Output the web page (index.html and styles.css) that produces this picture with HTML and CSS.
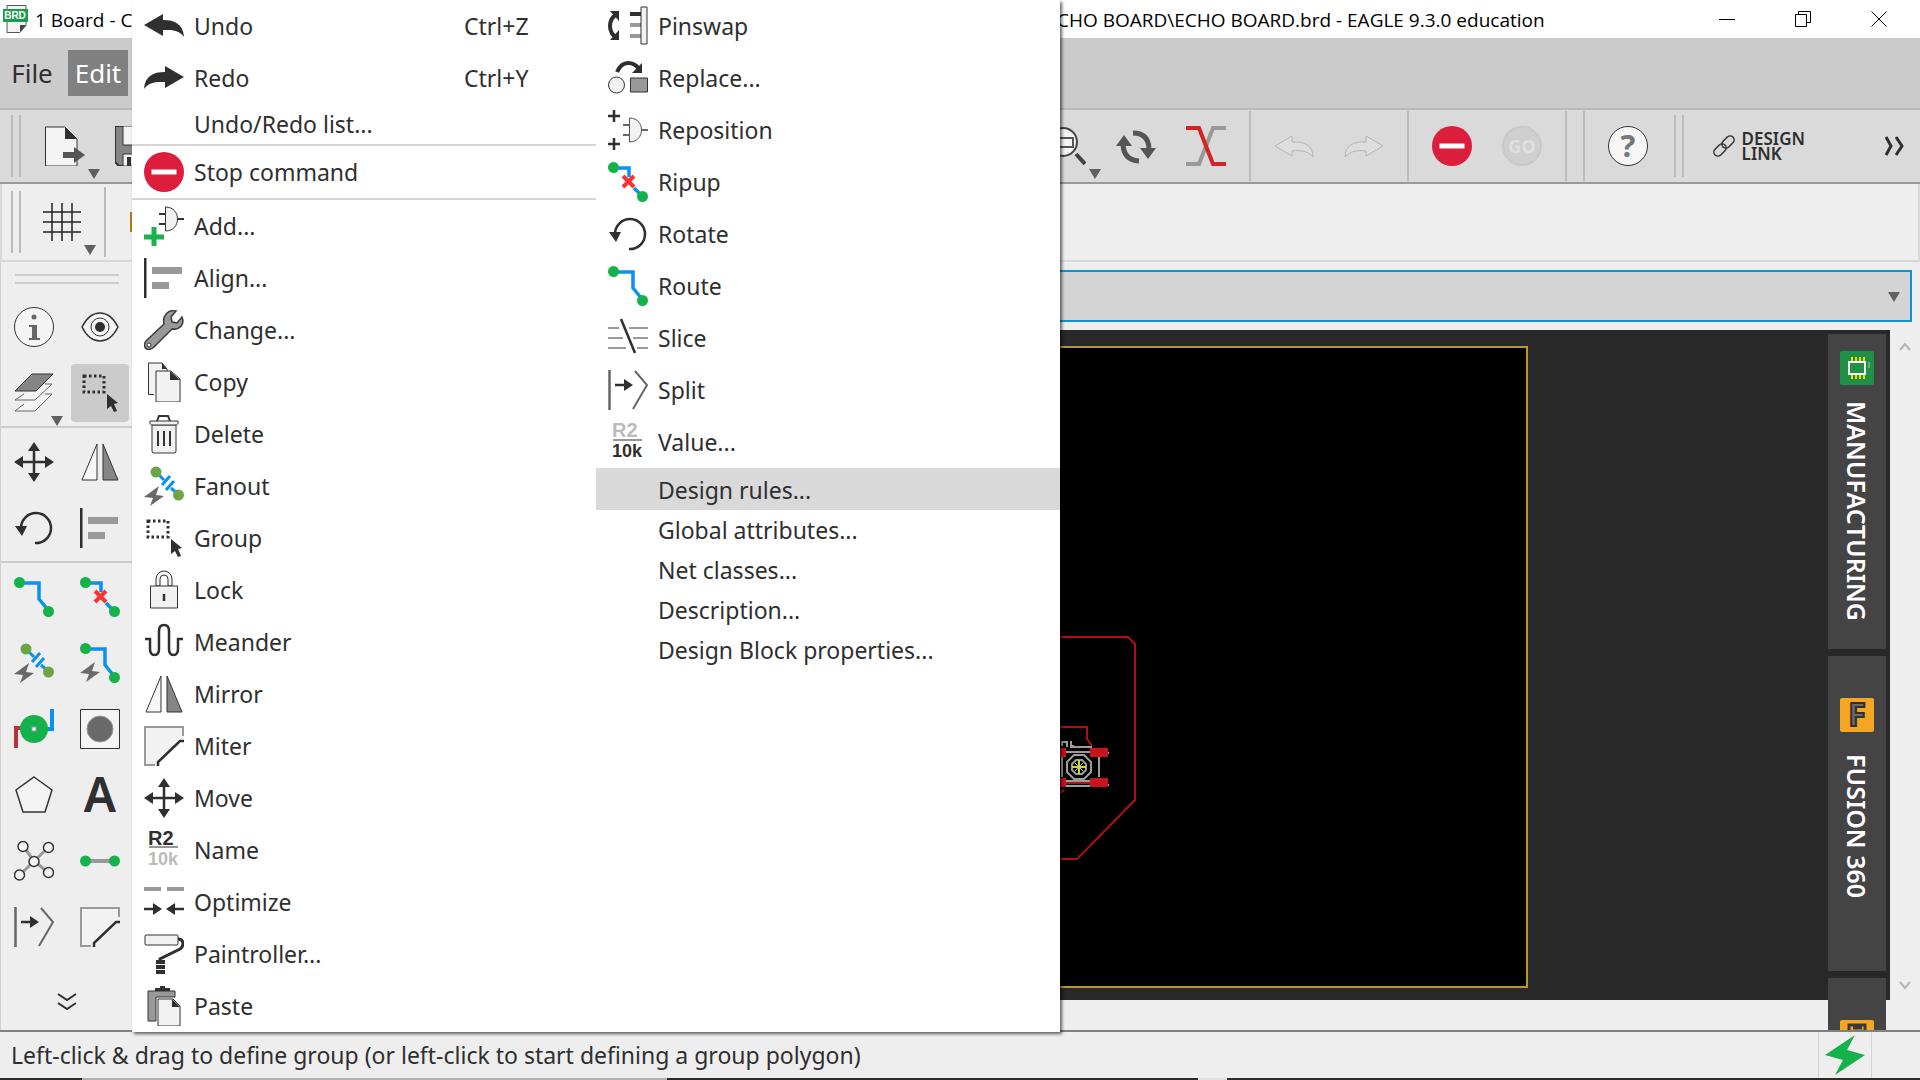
FILE: index.html
```html
<!DOCTYPE html>
<html lang="en">
<head>
    <meta charset="UTF-8">
    <meta name="viewport" content="width=device-width, initial-scale=1.0">
    <title>1 Board - EAGLE 9.3.0 education</title>
    <link rel="stylesheet" href="styles.css">
</head>
<body>
    <!-- Icon set, every symbol is drawn on a 40x40 grid -->
    <svg class="sprite" aria-hidden="true">
        <symbol id="undo" viewBox="0 0 40 40"><path d="M0 19L19 8V14C31 14 39 18 40 31C35 24 29 24 19 24V30Z" fill="#2f2f2f"/></symbol>
        <symbol id="redo" viewBox="0 0 40 40"><path d="M40 19L21 8V14C9 14 1 18 0 31C5 24 11 24 21 24V30Z" fill="#2f2f2f"/></symbol>
        <symbol id="undo-off" viewBox="0 0 40 40"><path d="M1 20L18 10V16C31 15 39 20 39 31C34 25 27 24 18 25V30Z" fill="#dedede" stroke="#b4b4b4"/></symbol>
        <symbol id="redo-off" viewBox="0 0 40 40"><path d="M39 20L22 10V16C9 15 1 20 1 31C6 25 13 24 22 25V30Z" fill="#dedede" stroke="#b4b4b4"/></symbol>
        <symbol id="stop" viewBox="0 0 40 40"><circle cx="20" cy="20" r="20" fill="#dc1e3c"/><path d="M7.500 17.500h25v5h-25z" fill="#fff"/></symbol>
        <symbol id="add" viewBox="0 0 40 40"><path d="M15 8h7M15 18h7M33 13h7" stroke="#333" stroke-width="2"/><path d="M21.500 1c8 0 12 6 12 12s-4 12-12 12z" fill="#f2f2f2" stroke="#333"/><path d="M0 31h20M10 21v20" stroke="#1cb14c" stroke-width="5"/></symbol>
        <symbol id="align" viewBox="0 0 40 40"><path d="M0 0h2.500v40H0z" fill="#2f2f2f"/><path d="M8 9h30v7H8zM8 24h17v7H8z" fill="#999"/></symbol>
        <symbol id="change" viewBox="0 0 40 40"><path d="M32 1L27 7L28 12L33 13L38 7C41 14 36 20 28 19L10 37C7 40 3 40 1.500 38C0 36 0 33 3 30L20 14C18 6 24-1 32 1Z" fill="#999" stroke="#3c3c3c" stroke-width="1.500"/><circle cx="5" cy="35" r="2" fill="#fff" stroke="#333"/></symbol>
        <symbol id="copy" viewBox="0 0 40 40"><path d="M10 32.500H4.500V1H18l5 6v4" fill="#f2f2f2" stroke="#333"/><path d="M18 1l5 6h-5z" fill="#2f2f2f"/><path d="M12 9h15l9 8v23H12z" fill="#f2f2f2" stroke="#333"/><path d="M26 9l10 9H26z" fill="#2f2f2f"/></symbol>
        <symbol id="delete" viewBox="0 0 40 40"><path d="M13 7l2-5h9l2 5" fill="none" stroke="#333" stroke-width="2"/><path d="M8 11h24v26q0 2-2 2H10q-2 0-2-2z" fill="#f2f2f2" stroke="#333"/><path d="M6 7h28q1 4-3 4H9Q5 11 6 7z" fill="#f2f2f2" stroke="#333"/><path d="M14 17v15M20 17v15M26 17v15" stroke="#333" stroke-width="2"/></symbol>
        <symbol id="fanout" viewBox="0 0 40 40"><path d="M12 6l8 8M27 22l8 7" stroke="#0a90f0" stroke-width="3"/><path d="M18 19l8-9M22 24l8-9" stroke="#0a90f0" stroke-width="3"/><circle cx="12" cy="6" r="5.500" fill="#6ba644"/><circle cx="34.500" cy="29" r="5.500" fill="#6ba644"/><path d="M15 20L0 31l9 1-3 8 14-10-8-1z" fill="#6a6a6a"/></symbol>
        <symbol id="group" viewBox="0 0 40 40"><rect x="4" y="3" width="20" height="16" fill="none" stroke="#2f2f2f" stroke-width="3" stroke-dasharray="2.500 2.500"/><path d="M27 21v15l4-3 3 6 3-1-3-7 4-1z" fill="#2f2f2f"/></symbol>
        <symbol id="lock" viewBox="0 0 40 40"><path d="M12 16V9a8 8 0 0 1 16 0v7h-4V9a4 4 0 0 0-8 0v7z" fill="#f2f2f2" stroke="#333"/><path d="M6.500 16h27v22h-27z" fill="#f2f2f2" stroke="#333"/><path d="M20 24v7" stroke="#333" stroke-width="2.500"/></symbol>
        <symbol id="meander" viewBox="0 0 40 40"><path d="M1 17h5v10q0 6 4.500 6T15 27V9q0-6 5-6t5 6v18q0 6 4.500 6T34 27V17h5" fill="none" stroke="#2f2f2f" stroke-width="2.500"/></symbol>
        <symbol id="mirror" viewBox="0 0 40 40"><path d="M17 2v36H2z" fill="#f6f6f6" stroke="#333"/><path d="M23 2v36h15z" fill="#858585" stroke="#333"/></symbol>
        <symbol id="miter" viewBox="0 0 40 40"><path d="M1 1h38v13L14 39H1z" fill="#f2f2f2"/><path d="M11 39H1V1h38v9" fill="none" stroke="#999" stroke-width="2"/><path d="M14 40v-4l22-21h4" fill="none" stroke="#2f2f2f" stroke-width="2.500"/></symbol>
        <symbol id="move" viewBox="0 0 40 40"><path d="M5 20h30M20 5v30" stroke="#2f2f2f" stroke-width="2.500"/><path d="M0 20l9-6v12zM40 20l-9-6v12zM20 0l-6 9h12zM20 40l-6-9h12z" fill="#2f2f2f"/></symbol>
        <symbol id="optimize" viewBox="0 0 40 40"><path d="M0 7h17M23 7h17" stroke="#999" stroke-width="4"/><path d="M0 27h12M28 27h12" stroke="#2f2f2f" stroke-width="2.500"/><path d="M9 21l9 6-9 6zM31 21l-9 6 9 6z" fill="#2f2f2f"/></symbol>
        <symbol id="paint" viewBox="0 0 40 40"><path d="M34 5q5 0 5 5 0 3-3 5L16 25v3" fill="none" stroke="#2f2f2f" stroke-width="3"/><rect x="1" y="1" width="33" height="10" rx="1" fill="#f2f2f2" stroke="#333"/><path d="M12 26h9v4h-9zM12 31h9v4h-9zM12 36h9v4h-9z" fill="#2f2f2f"/></symbol>
        <symbol id="paste" viewBox="0 0 40 40"><path d="M4 5h27v6H12v24H4z" fill="#999" stroke="#333"/><path d="M11 5V2h5V0h5v2h5v3z" fill="#2f2f2f"/><path d="M14 13h15l7 7v20H14z" fill="#f2f2f2" stroke="#333"/><path d="M28 13l8 8h-8z" fill="#2f2f2f"/></symbol>
        <symbol id="pinswap" viewBox="0 0 40 40"><path d="M9 8Q2 12 2 20t7 12" fill="none" stroke="#2f2f2f" stroke-width="4"/><path d="M2 5h9v10zM2 34h9V24z" fill="#2f2f2f"/><path d="M22 8h11" stroke="#2f2f2f" stroke-width="4"/><path d="M22 19h11M22 30h11" stroke="#999" stroke-width="4"/><path d="M33 1h6v37h-6z" fill="#f2f2f2" stroke="#333"/></symbol>
        <symbol id="replace" viewBox="0 0 40 40"><path d="M9 14Q13 5 20 5t11 6" fill="none" stroke="#2f2f2f" stroke-width="4"/><path d="M34 5v10H24z" fill="#2f2f2f"/><circle cx="8.500" cy="27" r="8" fill="#f2f2f2" stroke="#333"/><path d="M22.500 20h17v14h-17z" fill="#999" stroke="#333"/></symbol>
        <symbol id="reposition" viewBox="0 0 40 40"><path d="M0 6h12M6 0v12M0 34h12M6 28v12" stroke="#2f2f2f" stroke-width="2.500"/><path d="M15 15h7M15 25h7M33 20h7" stroke="#666" stroke-width="2"/><path d="M21.500 8c8 0 12 6 12 12s-4 12-12 12z" fill="#f2f2f2" stroke="#555"/></symbol>
        <symbol id="ripup" viewBox="0 0 40 40"><path d="M6 6h15v9M26 26l8 8" fill="none" stroke="#0a90f0" stroke-width="3.500"/><circle cx="5.500" cy="5.500" r="5.500" fill="#14b24b"/><circle cx="34.500" cy="34.500" r="5.500" fill="#14b24b"/><path d="M15 14l11 11M26 14L15 25" stroke="#fa3232" stroke-width="4"/></symbol>
        <symbol id="rotate" viewBox="0 0 40 40"><path d="M7 20A15 15 0 1 1 21 35" fill="none" stroke="#2f2f2f" stroke-width="2.500"/><path d="M1 18h12l-5 10z" fill="#2f2f2f"/></symbol>
        <symbol id="route" viewBox="0 0 40 40"><path d="M6 6h19v16l9 11" fill="none" stroke="#0a90f0" stroke-width="3.500"/><circle cx="5.500" cy="5.500" r="5.500" fill="#14b24b"/><circle cx="34.500" cy="34.500" r="5.500" fill="#14b24b"/></symbol>
        <symbol id="autoroute" viewBox="0 0 40 40"><path d="M6 6h19v16l9 11" fill="none" stroke="#0a90f0" stroke-width="3.500"/><circle cx="5.500" cy="5.500" r="5.500" fill="#14b24b"/><circle cx="34.500" cy="34.500" r="5.500" fill="#14b24b"/><path d="M15 19L0 30l9 1-3 8 14-10-8-1z" fill="#6a6a6a"/></symbol>
        <symbol id="slice" viewBox="0 0 40 40"><path d="M0 10h11M21 10h19M0 20h15M25 20h15M0 30h18M29 30h11" stroke="#999" stroke-width="2"/><path d="M13 1l14 34" stroke="#2f2f2f" stroke-width="2.500"/></symbol>
        <symbol id="split" viewBox="0 0 40 40"><path d="M1.500 0v40" stroke="#666" stroke-width="2.500"/><path d="M7 15h12" stroke="#2f2f2f" stroke-width="2.500"/><path d="M16 9l9 6-9 6z" fill="#2f2f2f"/><path d="M27 1l12 14-14 24" fill="none" stroke="#666" stroke-width="2"/></symbol>
        <symbol id="info" viewBox="0 0 40 40"><circle cx="20" cy="20" r="19.500" fill="#f4f4f4" stroke="#333"/><circle cx="20" cy="10" r="2.500" fill="#666"/><path d="M15 18h8v13h3v2H15v-2h3V20h-3z" fill="#666"/></symbol>
        <symbol id="eye" viewBox="0 0 40 40"><path d="M2 20Q9 6 20 6t18 14Q31 34 20 34T2 20z" fill="#f4f4f4" stroke="#333" stroke-width="1.500"/><circle cx="20" cy="20" r="9" fill="#f4f4f4" stroke="#333"/><circle cx="20" cy="20" r="5" fill="#2f2f2f"/></symbol>
        <symbol id="layers" viewBox="0 0 40 40"><path d="M10 31L1 38h20l17-17h-7M10 21L1 27h20l17-16h-7" fill="#f4f4f4" stroke="#666"/><path d="M18 1h21L22 18H1z" fill="#858585" stroke="#333"/></symbol>
        <symbol id="via" viewBox="0 0 40 40"><path d="M8 19H2v20" fill="none" stroke="#b8323c" stroke-width="4"/><path d="M32 20h6V0" fill="none" stroke="#0a90f0" stroke-width="4"/><circle cx="20" cy="20" r="14" fill="#14b24b"/><rect x="18" y="18" width="4" height="4" fill="#fff" stroke="#999"/></symbol>
        <symbol id="pad" viewBox="0 0 40 40"><path d="M.5.5h39v39H.5z" fill="#f4f4f4" stroke="#333"/><circle cx="20" cy="20" r="13" fill="#6a6a6a" stroke="#999"/></symbol>
        <symbol id="polygon" viewBox="0 0 40 40"><path d="M20 2l18 13-7 22H9L2 15z" fill="#f4f4f4" stroke="#333" stroke-width="1.500"/></symbol>
        <symbol id="ratsnest" viewBox="0 0 40 40"><path d="M20 20L9 5M20 20L35 6M20 20L35 32M20 20L6 34" stroke="#999" stroke-width="3"/><g fill="#f4f4f4" stroke="#333" stroke-width="1.500"><circle cx="9" cy="5.500" r="5"/><circle cx="34.500" cy="6.500" r="5"/><circle cx="20" cy="20.500" r="5"/><circle cx="34.500" cy="31.500" r="5"/><circle cx="5.500" cy="34" r="5"/></g></symbol>
        <symbol id="wire" viewBox="0 0 40 40"><path d="M6 20h28" stroke="#999" stroke-width="4"/><circle cx="5.500" cy="20" r="5.500" fill="#14b24b"/><circle cx="34.500" cy="20" r="5.500" fill="#14b24b"/></symbol>
        <symbol id="open" viewBox="0 0 40 40"><path d="M.5 1H20l12 12v27H.5z" fill="#f4f4f4" stroke="#333"/><path d="M20 1l12 12H20z" fill="#2f2f2f"/><path d="M18 26h11v-5l11 8-11 8v-5H18z" fill="#555"/></symbol>
        <symbol id="save" viewBox="0 0 40 40"><path d="M0 0h34l6 6v34H4l-4-4z" fill="#858585" stroke="#333" stroke-width="2"/><path d="M8 0h24v19H8zM8 28h24v12H8z" fill="#f4f4f4" stroke="#333"/><path d="M12 31h4v9h-4z" fill="#333"/></symbol>
        <symbol id="grid" viewBox="0 0 40 40"><path d="M0 10h38M0 20h38M0 30h38M9 1v38M19 1v38M29 1v38" stroke="#222" stroke-width="1.500"/></symbol>
        <symbol id="zoomsel" viewBox="0 0 40 40"><circle cx="17" cy="16" r="14" fill="#f4f4f4" stroke="#444" stroke-width="2"/><path d="M8 12h19v9H8z" fill="none" stroke="#555" stroke-width="2"/><path d="M30 28l9 10" stroke="#444" stroke-width="4"/></symbol>
        <symbol id="refresh" viewBox="0 0 40 40"><path d="M7 17q0 17 16 18M17 7q15 0 16 15" fill="none" stroke="#555" stroke-width="5"/><path d="M0 20L8 9l8 11zM24 22h16l-8 11z" fill="#555"/></symbol>
        <symbol id="swap" viewBox="0 0 40 40"><path d="M0 38h13L27 2h13" fill="none" stroke="#999" stroke-width="4"/><path d="M0 2h13l14 36h13" fill="none" stroke="#d42320" stroke-width="4"/></symbol>
        <symbol id="more" viewBox="0 0 20 20"><path d="M1 1l5 9-5 9M11 1l6 9-6 9" fill="none" stroke="#2f2f2f" stroke-width="3"/></symbol>
        <symbol id="tri" viewBox="0 0 12 10"><path d="M0 0h12L6 10z" fill="#606060"/></symbol>
        <symbol id="chip" viewBox="0 0 34 34"><rect width="34" height="34" rx="2" fill="#1f9146"/><path d="M12 6v22M16 6v22M20 6v22M24 6v22" stroke="#f4e000" stroke-width="2"/><path d="M9 11h16v12H9z" fill="#1f9146" stroke="#fff" stroke-width="2"/><path d="M29 11v6" stroke="#9fd0ae"/></symbol>
    </svg>

    <header class="titlebar">
        <svg class="app-icon" viewBox="0 0 26 28"><path d="M4 .5h19v20l-6 7H4z" fill="#f4f4f4" stroke="#555"/><path d="M23 20l-6 7v-7z" fill="#444"/><path d="M0 4h25v13H0z" fill="#1c9c4a"/><text class="glyph" x="12" y="14" font-size="10" text-anchor="middle" fill="#fff">BRD</text></svg>
        <span class="title-start">1 Board - C</span>
        <span class="title-end">CHO BOARD\ECHO BOARD.brd - EAGLE 9.3.0 education</span>
        <div class="window-buttons">
            <button aria-label="Minimize"><svg viewBox="0 0 16 16"><path d="M0 8.500h16" stroke="#000"/></svg></button>
            <button aria-label="Restore"><svg viewBox="0 0 16 16"><path d="M.5 3.500h11v12H.5zM3.500 3V.5h12v11H12" fill="none" stroke="#000"/></svg></button>
            <button aria-label="Close"><svg viewBox="0 0 16 16"><path d="M.5.5l15 15M15.500.5l-15 15" stroke="#000"/></svg></button>
        </div>
    </header>

    <nav class="menubar">
        <button>File</button>
        <button class="open">Edit</button>
    </nav>

    <div class="toolbar">
        <span class="grip"></span>
        <button class="tool has-menu" aria-label="Open"><svg><use href="#open"/></svg><svg class="tri"><use href="#tri"/></svg></button>
        <button class="tool" aria-label="Save"><svg><use href="#save"/></svg></button>
        <span class="spacer"></span>
        <button class="tool has-menu" aria-label="Zoom select"><svg><use href="#zoomsel"/></svg><svg class="tri"><use href="#tri"/></svg></button>
        <button class="tool" aria-label="Redraw"><svg><use href="#refresh"/></svg></button>
        <button class="tool" aria-label="Swap layers"><svg><use href="#swap"/></svg></button>
        <span class="divider"></span>
        <button class="tool" aria-label="Undo" disabled><svg><use href="#undo-off"/></svg></button>
        <button class="tool" aria-label="Redo" disabled><svg><use href="#redo-off"/></svg></button>
        <span class="divider"></span>
        <button class="tool" aria-label="Stop"><svg><use href="#stop"/></svg></button>
        <button class="tool" aria-label="Go" disabled><svg viewBox="0 0 40 40"><circle cx="20" cy="20" r="19" fill="#cfcfcf" stroke="#c9c9c9" stroke-width="2"/><text class="letter" x="20" y="27" font-size="18" text-anchor="middle" fill="#e0e0e0">GO</text></svg></button>
        <span class="divider"></span>
        <span class="divider"></span>
        <button class="tool" aria-label="Help"><svg viewBox="0 0 40 40"><circle cx="20" cy="20" r="19.500" fill="#f6f6f6" stroke="#333"/><text class="letter" x="20" y="31" font-size="31" text-anchor="middle" fill="#777">?</text></svg></button>
        <span class="grip"></span>
        <button class="design-link">
            <svg viewBox="0 0 22 22"><g fill="none" stroke="#333" stroke-width="1.500"><rect x="-7" y="-4" width="14" height="8" rx="4" transform="translate(7 15) rotate(-45)"/><rect x="-7" y="-4" width="14" height="8" rx="4" transform="translate(15 7) rotate(-45)"/></g></svg>
            <span>DESIGN<br>LINK</span>
        </button>
        <button class="more" aria-label="More tools"><svg><use href="#more"/></svg></button>
    </div>

    <div class="parambar">
        <span class="grip"></span>
        <button class="tool has-menu" aria-label="Grid"><svg><use href="#grid"/></svg><svg class="tri"><use href="#tri"/></svg></button>
        <span class="divider"></span>
        <span class="layer-color"></span>
    </div>

    <div class="workspace">
        <aside class="palette">
            <span class="palette-grip"></span>
            <div class="tools">
                <button class="tool" aria-label="Info"><svg><use href="#info"/></svg></button>
                <button class="tool" aria-label="Show"><svg><use href="#eye"/></svg></button>
                <button class="tool has-menu" aria-label="Layer settings"><svg><use href="#layers"/></svg><svg class="tri"><use href="#tri"/></svg></button>
                <button class="tool active" aria-label="Group"><svg><use href="#group"/></svg></button>
            </div>
            <div class="tools">
                <button class="tool" aria-label="Move"><svg><use href="#move"/></svg></button>
                <button class="tool" aria-label="Mirror"><svg><use href="#mirror"/></svg></button>
                <button class="tool" aria-label="Rotate"><svg><use href="#rotate"/></svg></button>
                <button class="tool" aria-label="Align"><svg><use href="#align"/></svg></button>
            </div>
            <div class="tools">
                <button class="tool" aria-label="Route"><svg><use href="#route"/></svg></button>
                <button class="tool" aria-label="Ripup"><svg><use href="#ripup"/></svg></button>
                <button class="tool" aria-label="Fanout"><svg><use href="#fanout"/></svg></button>
                <button class="tool" aria-label="Autorouter"><svg><use href="#autoroute"/></svg></button>
                <button class="tool" aria-label="Via"><svg><use href="#via"/></svg></button>
                <button class="tool" aria-label="Hole"><svg><use href="#pad"/></svg></button>
                <button class="tool" aria-label="Polygon"><svg><use href="#polygon"/></svg></button>
                <button class="tool" aria-label="Text"><svg viewBox="0 0 40 40"><text class="letter-a" x="20" y="37" font-size="48" text-anchor="middle" fill="#2f2f2f">A</text></svg></button>
                <button class="tool" aria-label="Ratsnest"><svg><use href="#ratsnest"/></svg></button>
                <button class="tool" aria-label="Signal"><svg><use href="#wire"/></svg></button>
                <button class="tool" aria-label="Split"><svg><use href="#split"/></svg></button>
                <button class="tool" aria-label="Miter"><svg><use href="#miter"/></svg></button>
            </div>
            <button class="palette-more" aria-label="More tools"><svg viewBox="0 0 20 18"><path d="M1 2l9 6 9-6M1 11l9 6 9-6" fill="none" stroke="#2f2f2f" stroke-width="2"/></svg></button>
        </aside>

        <main class="editor">
            <div class="command">
                <select aria-label="Command line"><option></option></select>
                <svg class="tri"><use href="#tri"/></svg>
            </div>
            <div class="board">
                <div class="canvas">
                    <svg viewBox="133 330 1695 670" preserveAspectRatio="xMidYMid slice">
                        <path d="M500 347h1027v640H500z" fill="#000" stroke="#b9982f" stroke-width="2"/>
                        <g fill="none" stroke="#b01015" stroke-width="2">
                            <path d="M1000 637h128l7 7v156l-58 59h-77M1060 727h27v12l5 7"/>
                            <path d="M1066 783h26M1060 793l4-3"/>
                        </g>
                        <g fill="none" stroke="#9c9c9c" stroke-width="2">
                            <path d="M1070 747h22M1064 752h28M1064 781h28M1064 786h28M1099 757v20M1062 757v20"/>
                            <path d="M1074 755h10l7 7v10l-7 7h-10l-7-7v-10z"/>
                            <path d="M1076 760h6l4 4v6l-4 4h-6l-4-4v-6z"/>
                            <path d="M1062 746v-4h5v5M1071 741v5h3M1106 753h3M1106 785h3"/>
                        </g>
                        <path d="M1090 748h18v9h-18zM1090 778h18v9h-18zM1060 748h6v9h-6zM1060 778h6v9h-6z" fill="#c8141a"/>
                        <path d="M1072 767h14M1079 760v14" stroke="#c8d62a" stroke-width="2"/>
                        <path d="M1075 763l8 8M1083 763l-8 8" stroke="#c9c9a0"/>
                    </svg>
                </div>
                <div class="side-tabs">
                    <button class="side-tab"><svg><use href="#chip"/></svg><span>MANUFACTURING</span></button>
                    <button class="side-tab fusion"><svg viewBox="0 0 34 34"><rect width="34" height="34" rx="2" fill="#f6a623"/><text class="letter" x="17" y="28" font-size="32" text-anchor="middle" fill="#6a6a6a" stroke="#2f2f2f" stroke-width="2">F</text></svg><span>FUSION 360</span></button>
                    <button class="side-tab fusion" aria-label="Fusion"><svg viewBox="0 0 34 34"><rect width="34" height="34" rx="2" fill="#f6a623"/><path d="M9 10V5h16v5M13 8h9" fill="none" stroke="#3a3a3a" stroke-width="3"/></svg></button>
                </div>
                <div class="scrollbar">
                    <svg viewBox="0 0 12 10"><path d="M1 8l5-6 5 6" fill="none" stroke="#b4b4b4" stroke-width="2"/></svg>
                    <svg viewBox="0 0 12 10"><path d="M1 2l5 6 5-6" fill="none" stroke="#b4b4b4" stroke-width="2"/></svg>
                </div>
            </div>
        </main>
    </div>

    <footer class="statusbar">
        <span>Left-click &amp; drag to define group (or left-click to start defining a group polygon)</span>
        <div class="sync"><svg viewBox="0 0 40 40"><path d="M30 0L0 20l18 5-8 15 30-20-18-5z" fill="#14b24b"/></svg></div>
    </footer>
    <div class="screen-edge"></div>

    <!-- Edit menu -->
    <div class="menu" role="menu">
        <div class="menu-column">
            <button role="menuitem"><svg><use href="#undo"/></svg><span>Undo</span><kbd>Ctrl+Z</kbd></button>
            <button role="menuitem"><svg><use href="#redo"/></svg><span>Redo</span><kbd>Ctrl+Y</kbd></button>
            <button role="menuitem" class="plain">Undo/Redo list...</button>
            <hr>
            <button role="menuitem"><svg><use href="#stop"/></svg><span>Stop command</span></button>
            <hr>
            <button role="menuitem"><svg><use href="#add"/></svg><span>Add...</span></button>
            <button role="menuitem"><svg><use href="#align"/></svg><span>Align...</span></button>
            <button role="menuitem"><svg><use href="#change"/></svg><span>Change...</span></button>
            <button role="menuitem"><svg><use href="#copy"/></svg><span>Copy</span></button>
            <button role="menuitem"><svg><use href="#delete"/></svg><span>Delete</span></button>
            <button role="menuitem"><svg><use href="#fanout"/></svg><span>Fanout</span></button>
            <button role="menuitem"><svg><use href="#group"/></svg><span>Group</span></button>
            <button role="menuitem"><svg><use href="#lock"/></svg><span>Lock</span></button>
            <button role="menuitem"><svg><use href="#meander"/></svg><span>Meander</span></button>
            <button role="menuitem"><svg><use href="#mirror"/></svg><span>Mirror</span></button>
            <button role="menuitem"><svg><use href="#miter"/></svg><span>Miter</span></button>
            <button role="menuitem"><svg><use href="#move"/></svg><span>Move</span></button>
            <button role="menuitem"><svg viewBox="0 0 40 40"><text class="glyph" x="4" y="15" font-size="20" fill="#2f2f2f">R2</text><path d="M5 17h29" stroke="#2f2f2f"/><text class="glyph" x="4" y="35" font-size="18" fill="#bbb">10k</text></svg><span>Name</span></button>
            <button role="menuitem"><svg><use href="#optimize"/></svg><span>Optimize</span></button>
            <button role="menuitem"><svg><use href="#paint"/></svg><span>Paintroller...</span></button>
            <button role="menuitem"><svg><use href="#paste"/></svg><span>Paste</span></button>
        </div>
        <div class="menu-column">
            <button role="menuitem"><svg><use href="#pinswap"/></svg><span>Pinswap</span></button>
            <button role="menuitem"><svg><use href="#replace"/></svg><span>Replace...</span></button>
            <button role="menuitem"><svg><use href="#reposition"/></svg><span>Reposition</span></button>
            <button role="menuitem"><svg><use href="#ripup"/></svg><span>Ripup</span></button>
            <button role="menuitem"><svg><use href="#rotate"/></svg><span>Rotate</span></button>
            <button role="menuitem"><svg><use href="#route"/></svg><span>Route</span></button>
            <button role="menuitem"><svg><use href="#slice"/></svg><span>Slice</span></button>
            <button role="menuitem"><svg><use href="#split"/></svg><span>Split</span></button>
            <button role="menuitem"><svg viewBox="0 0 40 40"><text class="glyph" x="4" y="15" font-size="20" fill="#bbb">R2</text><path d="M5 18h29" stroke="#2f2f2f"/><text class="glyph" x="4" y="35" font-size="18" fill="#2f2f2f">10k</text></svg><span>Value...</span></button>
            <button role="menuitem" class="plain hover">Design rules...</button>
            <button role="menuitem" class="plain">Global attributes...</button>
            <button role="menuitem" class="plain">Net classes...</button>
            <button role="menuitem" class="plain">Description...</button>
            <button role="menuitem" class="plain">Design Block properties...</button>
        </div>
    </div>
</body>
</html>
```
FILE: styles.css
```css
* {
    margin: 0;
    padding: 0;
    box-sizing: border-box;
}

body {
    height: 100vh;
    display: flex;
    flex-direction: column;
    overflow: hidden;
    background: #eee;
    color: #2f2f2f;
    font-family: "Noto Sans", "Open Sans", sans-serif;
    font-size: 23px;
}

button {
    border: none;
    background: none;
    color: inherit;
    font: inherit;
}

svg {
    display: block;
    flex: none;
}

.sprite {
    position: absolute;
    width: 0;
    height: 0;
}

.glyph {
    font-family: "Liberation Sans", sans-serif;
    font-weight: bold;
}

.letter {
    font-family: "Noto Sans", sans-serif;
    font-weight: bold;
}

.letter-a {
    font-family: "Noto Sans", sans-serif;
    font-weight: 600;
}

/* Title bar */
.titlebar {
    height: 38px;
    display: flex;
    align-items: center;
    padding-left: 3px;
    background: #fff;
    color: #000;
    font-family: "Open Sans", sans-serif;
    font-size: 19px;
    white-space: nowrap;
}

.titlebar span {
    padding-top: 2px;
}

.app-icon {
    width: 26px;
    height: 28px;
    margin-right: 6px;
}

.title-start {
    width: 1022px;
}

.title-end {
    flex: 1;
}

.window-buttons {
    display: flex;
    padding-right: 3px;
}

.window-buttons button {
    width: 76px;
    height: 38px;
    display: flex;
    justify-content: center;
    align-items: center;
}

.window-buttons svg {
    width: 16px;
    height: 16px;
}

/* Menu bar */
.menubar {
    height: 72px;
    display: flex;
    align-items: center;
    gap: 7px;
    padding-left: 3px;
    background: #cbcbcb;
    border-bottom: 2px solid #b9b9b9;
    font-size: 26px;
}

.menubar button {
    height: 46px;
    width: 58px;
    line-height: 46px;
}

.menubar .open {
    width: 60px;
    background: #808080;
    color: #fff;
}

/* Tool bars */
.toolbar,
.parambar {
    display: flex;
    align-items: center;
}

.toolbar {
    height: 74px;
    background: #dadada;
    border-bottom: 2px solid #999;
}

.parambar {
    height: 78px;
    border: 2px solid #d9d9d9;
    border-top: none;
}

.tool {
    position: relative;
    width: 70px;
    height: 66px;
    display: flex;
    justify-content: center;
    align-items: center;
}

.tool svg {
    width: 40px;
    height: 40px;
}

.tool .tri {
    position: absolute;
    right: 0;
    bottom: 0;
}

.tri,
.tool .tri {
    width: 12px;
    height: 10px;
}

.parambar .tool {
    width: 66px;
}

.grip {
    width: 10px;
    height: 62px;
    margin: 0 9px 0 11px;
    border: 2px solid #bcbcbc;
    border-width: 0 2px;
}

.parambar .grip {
    margin-left: 9px;
}

.divider {
    width: 2px;
    height: 70px;
    margin: 0 8px;
    background: #bcbcbc;
}

.spacer {
    flex: 1;
}

.layer-color {
    width: 8px;
    height: 20px;
    margin-left: 16px;
    background: #b87a1c;
}

.design-link {
    display: flex;
    align-items: center;
    gap: 7px;
    margin-left: 20px;
    font-size: 17px;
    font-weight: 600;
    line-height: 15px;
    text-align: left;
}

.design-link svg {
    width: 22px;
    height: 22px;
}

.more {
    margin: 0 15px 0 80px;
}

.more svg {
    width: 20px;
    height: 20px;
}

/* Tool palette */
.workspace {
    flex: 1;
    min-height: 0;
    display: flex;
}

.palette {
    width: 133px;
    border-left: 1px solid #d0d0d0;
    display: flex;
    flex-direction: column;
    align-items: center;
}

.palette-grip {
    width: 104px;
    height: 10px;
    margin: 12px 0 10px;
    border: 2px solid #ccc;
    border-width: 2px 0;
}

.tools {
    width: 132px;
    display: grid;
    grid-template-columns: 66px 66px;
}

.tools + .tools {
    padding-top: 1px;
    border-top: 2px solid #ccc;
}

.tools .tool {
    width: 66px;
}

.tools .tri {
    right: 4px;
}

.tools .active::before {
    content: "";
    position: absolute;
    inset: 4px;
    border-radius: 4px;
    background: #cbcbcb;
}

.tools .active svg {
    position: relative;
}

.palette-more {
    margin-top: 32px;
}

.palette-more svg {
    width: 20px;
    height: 18px;
}

/* Board editor */
.editor {
    flex: 1;
    min-width: 0;
    display: flex;
    flex-direction: column;
    padding-top: 8px;
}

.command {
    position: relative;
    margin: 0 8px 8px 0;
}

.command select {
    display: block;
    width: 100%;
    height: 52px;
    appearance: none;
    border: 2px solid #0a94d6;
    background: #d4d4d4;
    font: inherit;
}

.command .tri {
    position: absolute;
    right: 12px;
    top: 22px;
}

.board {
    flex: 1;
    min-height: 0;
    display: flex;
}

.canvas {
    flex: 1;
    min-width: 0;
    margin-bottom: 30px;
    background: #282828;
    overflow: hidden;
}

.canvas svg {
    width: 100%;
    height: 100%;
}

.side-tabs {
    width: 62px;
    display: flex;
    flex-direction: column;
    gap: 7px;
    padding: 4px 4px 0 0;
    overflow: hidden;
    background: linear-gradient(#282828, #282828) no-repeat 0 0 / 100% calc(100% - 30px);
}

.side-tab {
    flex: none;
    height: 315px;
    display: flex;
    flex-direction: column;
    align-items: center;
    gap: 16px;
    padding-top: 17px;
    background: #444;
    color: #fff;
    font-size: 25px;
    font-weight: 600;
    line-height: 34px;
}

.side-tab.fusion {
    gap: 22px;
    padding-top: 42px;
}

.side-tab svg {
    width: 34px;
    height: 34px;
}

.side-tab span {
    writing-mode: vertical-rl;
}

.scrollbar {
    width: 30px;
    display: flex;
    flex-direction: column;
    justify-content: space-between;
    align-items: center;
    padding: 12px 0 40px;
}

.scrollbar svg {
    width: 12px;
    height: 10px;
}

/* Status bar */
.statusbar {
    height: 48px;
    display: flex;
    justify-content: space-between;
    align-items: center;
    padding: 0 48px 0 11px;
    border-top: 2px solid #808080;
}

.screen-edge {
    height: 2px;
    background: linear-gradient(90deg, #2b2b2b 82px, #b0b0b0 82px 667px, #2b2b2b 667px 1198px, #e0e0e0 1198px 1227px, #2b2b2b 1227px);
}

.sync {
    width: 54px;
    height: 46px;
    display: flex;
    justify-content: center;
    align-items: center;
    border: 1px solid #d4d4d4;
    border-width: 0 1px;
}

.sync svg {
    width: 40px;
    height: 40px;
}

/* Edit menu */
.menu {
    position: absolute;
    top: 0;
    left: 132px;
    display: flex;
    background: #fff;
    box-shadow: 2px 2px 3px rgba(0, 0, 0, 0.6);
}

.menu-column {
    width: 464px;
}

.menu button {
    width: 100%;
    height: 52px;
    display: flex;
    align-items: center;
    gap: 10px;
    padding: 0 12px;
    text-align: left;
    white-space: nowrap;
}

.menu svg {
    width: 40px;
    height: 40px;
}

.menu kbd {
    width: 120px;
    margin-left: auto;
    font: inherit;
}

.menu .plain {
    height: 40px;
    padding-left: 62px;
}

.menu .hover {
    height: 42px;
    padding-top: 2px;
    background: #d9d9d9;
}

.menu hr {
    height: 2px;
    border: none;
    background: #d4d4d4;
}
```
